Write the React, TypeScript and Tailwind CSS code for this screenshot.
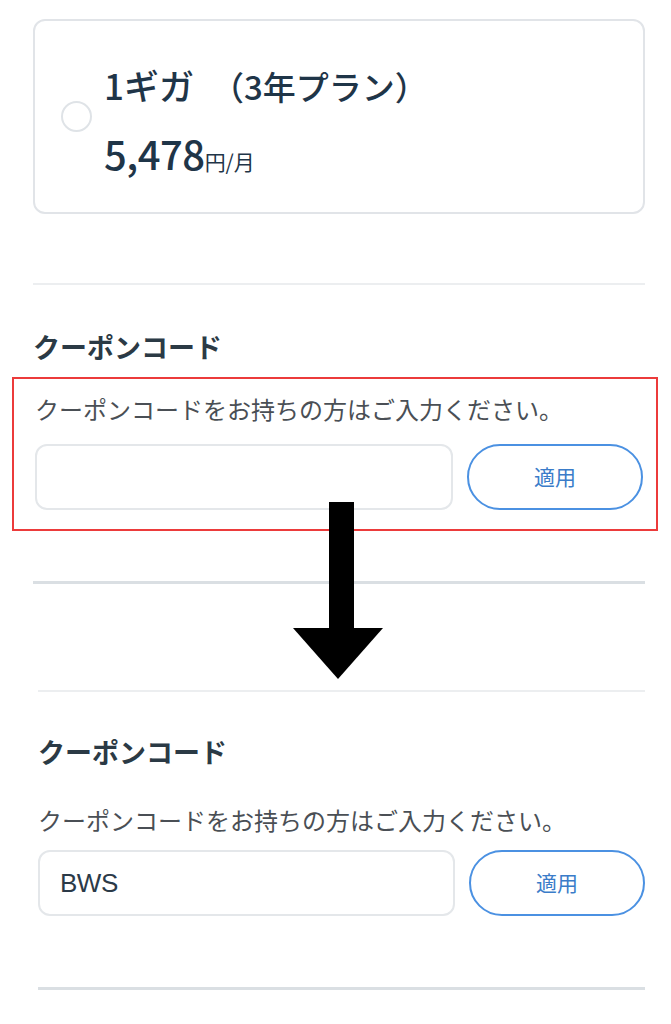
import React from "react";

const font = { fontFamily: '"Noto Sans CJK JP", "Noto Sans", sans-serif' };

function CouponForm({ code }: { code?: string }) {
  return (
    <div className="flex gap-[14px]">
      <div className="flex h-[66px] flex-1 items-center rounded-[12px] border-2 border-[#e4e7ea] bg-white pl-[20px]">
        <span
          className="text-[26px] tracking-[-0.5px] text-[#2b3a48]"
          style={{ fontFamily: '"Liberation Sans", "Noto Sans CJK JP", sans-serif' }}
        >
          {code}
        </span>
      </div>
      <button className="flex h-[66px] w-[176px] items-center justify-center rounded-full border-2 border-[#4b91e2] bg-white text-[21px] text-[#3a7cc9]">
        適用
      </button>
    </div>
  );
}

export default function App() {
  return (
    <div className="relative h-[1024px] w-[671px] overflow-hidden bg-white" style={font}>
      {/* before */}
      <div className="pl-[33px] pr-[26px]">
        <div className="mt-[19px] flex h-[195px] items-center rounded-[12px] border-2 border-[#e1e4e8]">
          <div className="ml-[26px] h-[31px] w-[31px] rounded-full border-2 border-[#dfe3e7]" />
          <div className="ml-[12px] mt-[6px] text-[#1f3548]">
            <div className="flex items-baseline leading-none">
              <span className="text-[35px] font-medium">1ギガ</span>
              <span className="ml-[17px] text-[33px] font-medium">（3年プラン）</span>
            </div>
            <div className="mt-[30px] flex items-baseline leading-none">
              <span className="text-[40px] font-medium tracking-[-0.5px]">5,478</span>
              <span className="text-[21px]">円/月</span>
            </div>
          </div>
        </div>
        <div className="mt-[69px] h-[2px] bg-[#eceef0]" />
        <h2 className="mt-[42px] text-[27px] font-bold leading-[40px] text-[#2b3a45]">クーポンコード</h2>
        <div className="-ml-[21px] -mr-[13px] mt-[10px] border-2 border-[#ec3b3b] pb-[19px] pl-[21px] pr-[13px] pt-[13px]">
          <p className="text-[24px] leading-[34px] text-[#4a4f55]">
            クーポンコードをお持ちの方はご入力ください。
          </p>
          <div className="mt-[18px]">
            <CouponForm />
          </div>
        </div>
        <div className="mt-[50px] h-[3px] bg-[#dadfe3]" />
      </div>

      {/* after */}
      <div className="pl-[38px] pr-[26px]">
        <div className="mt-[106px] h-[2px] bg-[#eceef0]" />
        <h2 className="mt-[40px] text-[27px] font-bold leading-[40px] text-[#2b3a45]">クーポンコード</h2>
        <p className="mt-[31px] text-[24px] leading-[34px] text-[#4a4f55]">
          クーポンコードをお持ちの方はご入力ください。
        </p>
        <div className="mt-[13px]">
          <CouponForm code="BWS" />
        </div>
        <div className="mt-[71px] h-[3px] bg-[#dadfe3]" />
      </div>

      {/* arrow annotation */}
      <svg
        className="absolute left-[293px] top-[502px]"
        width="90"
        height="177"
        viewBox="0 0 90 177"
      >
        <rect x="36" y="0" width="25" height="128" fill="#000" />
        <polygon points="0,126 90,126 45,177" fill="#000" />
      </svg>
    </div>
  );
}
